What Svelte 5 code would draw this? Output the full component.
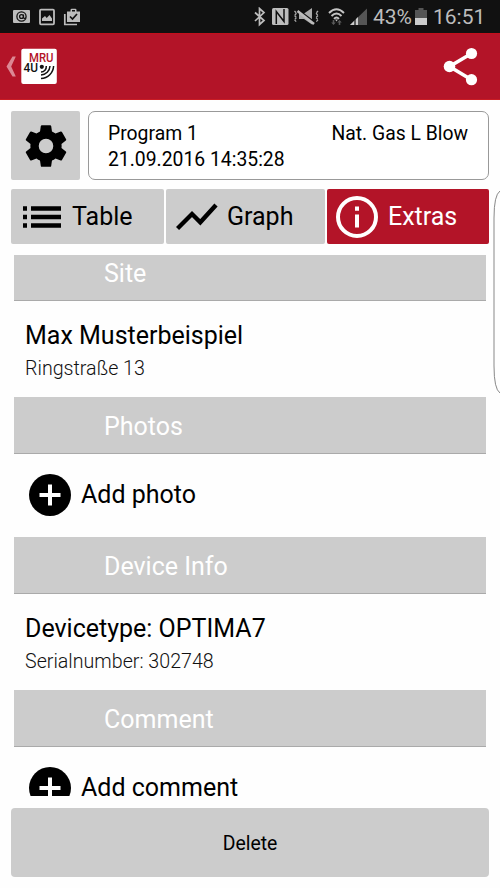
<script lang="ts">
	type Row = { title: string; detail?: string; action?: boolean };
	type Section = { name: string; row: Row };

	const sections: Section[] = [
		{ name: 'Site', row: { title: 'Max Musterbeispiel', detail: 'Ringstraße 13' } },
		{ name: 'Photos', row: { title: 'Add photo', action: true } },
		{ name: 'Device Info', row: { title: 'Devicetype: OPTIMA7', detail: 'Serialnumber: 302748' } },
		{ name: 'Comment', row: { title: 'Add comment', action: true } }
	];

	let active = 'extras';
</script>

<div class="screen">
	<div class="status">
		<svg class="notifications" width="68" height="18" viewBox="0 0 68 18">
			<rect x="0" y="2" width="17" height="13" rx="1" fill="#bdbdbd" />
			<circle cx="8.5" cy="8.5" r="4.6" fill="none" stroke="#111" stroke-width="1.3" />
			<circle cx="8.5" cy="8.5" r="1.9" fill="none" stroke="#111" stroke-width="1.3" />
			<path d="M10.5 6.5v3q.7 1.8 2.3.2" fill="none" stroke="#111" stroke-width="1.2" />
			<rect x="27" y="1.7" width="14" height="14.6" rx="1" fill="none" stroke="#bdbdbd" stroke-width="1.8" />
			<path d="M29 13v-2.5l3-2.5 1.7 2 2.8-3 2.5 3.4V13z" fill="#bdbdbd" />
			<path d="M51.8 6v10.5H64" fill="none" stroke="#bdbdbd" stroke-width="1.7" />
			<path d="M54 3.5h3.5V2q0-1.3 1.3-1.3h3.4q1.3 0 1.3 1.3v1.5H67V14H54z" fill="#bdbdbd" />
			<path d="M59 2h3v1.5h-3z" fill="#111" />
			<path d="M57 8.5l2.5 2.5L64 6" fill="none" stroke="#111" stroke-width="1.7" />
		</svg>
		<div class="indicators">
			<svg width="115" height="20" viewBox="0 0 115 20">
				<path d="M1 5.5l9 8-4.5 4v-16l4.500 4-9 8.500" fill="none" stroke="#bdbdbd" stroke-width="1.7" />
				<rect x="18" y="1" width="16.5" height="17" rx="1.5" fill="#bdbdbd" />
				<path d="M22.3 17V4.500L30 14.500V2" fill="none" stroke="#111" stroke-width="1.5" />
				<path d="M45 6.500h5l8-5.500v16.500l-8-5.500h-5z" fill="#aaa" />
				<path d="M43 2l19 14.500" stroke="#111" stroke-width="2" />
				<path d="M43.500 4l16.500 13" stroke="#bdbdbd" stroke-width="2.600" />
				<path d="M40.500 4l2 2.200-2 2.200 2 2.200-2 2.200 2 2.200M64 4l-2 2.200 2 2.200-2 2.200 2 2.200-2 2.200" fill="none" stroke="#aaa" stroke-width="1.3" stroke-dasharray="2.4 .6" />
				<path d="M75 6q7.500-7.500 15 0M77.500 9q5-5 10 0M80 11.800q2.500-2.600 5 0" fill="none" stroke="#c4c4c4" stroke-width="1.9" />
				<path d="M81 12.500h3l-1.500 2z" fill="#bdbdbd" />
				<path d="M79.500 18l-2.300-2.500h1.500V13h1.600v2.500h1.500zM85.500 13l2.300 2.500h-1.500V18h-1.600v-2.500h-1.500z" fill="#5a5a5a" />
				<path d="M96 18L113 1.500V18z" fill="#555" />
				<path d="M96 18l8-8v8z" fill="#ccc" />
				<path d="M101 12v6" stroke="#111" stroke-width="1.2" />
			</svg>
			<span class="percent">43%</span>
			<svg class="battery" width="12" height="18" viewBox="0 0 12 18">
				<path d="M0 2h3.500V0h5v2H12v8H0z" fill="#555" />
				<path d="M0 10h12v7H0z" fill="#ccc" />
			</svg>
			<span class="clock">16:51</span>
		</div>
	</div>

	<header class="appbar">
		<svg class="home" width="54" height="40" viewBox="0 0 54 40">
			<path d="M7.500 9.500h3.300L6.200 19.500l4.600 10H7.500L1.500 19.500z" fill="#dc8894" />
			<rect x="16.3" y="1.8" width="35.5" height="35.2" rx="2" fill="#fff" />
			<text class="logo red" x="24" y="15.3" textLength="24.5" lengthAdjust="spacingAndGlyphs">MRU</text>
			<text class="logo" x="18.5" y="25.4" textLength="14.5" lengthAdjust="spacingAndGlyphs">4U</text>
			<circle cx="36.8" cy="19.8" r="2.1" fill="#111" />
			<path d="M41.300 19a5.500 5.500 0 0 1-5.300 6M45 19a9.500 9.500 0 0 1-9 9M48.600 19a13 13 0 0 1-12.600 12.500" fill="none" stroke="#111" stroke-width="1.5" />
		</svg>
		<svg class="share" width="36" height="40" viewBox="0 0 36 40">
			<path d="M28.500 6.500L6.500 19.500l22 13.200" fill="none" stroke="#fff" stroke-width="3.6" />
			<circle cx="28.5" cy="6.5" r="5.6" fill="#fff" />
			<circle cx="6.5" cy="19.5" r="5.8" fill="#fff" />
			<circle cx="28.5" cy="32.7" r="5.6" fill="#fff" />
		</svg>
	</header>

	<div class="summary">
		<button class="settings" aria-label="Settings">
			<svg width="50" height="50" viewBox="0 0 24 24">
				<path d="M19.430 12.980c.040-.320.070-.640.070-.980s-.030-.660-.070-.980l2.110-1.650c.190-.150.240-.420.120-.640l-2-3.460c-.120-.220-.390-.300-.610-.220l-2.490 1c-.520-.400-1.080-.730-1.690-.980l-.380-2.650C14.460 2.180 14.250 2 14 2h-4c-.250 0-.460.180-.490.420l-.380 2.650c-.610.250-1.170.590-1.690.980l-2.490-1c-.230-.090-.490 0-.610.220l-2 3.460c-.130.220-.070.490.120.640l2.110 1.650c-.040.320-.070.650-.070.980s.030.660.070.980l-2.110 1.650c-.190.150-.240.420-.120.640l2 3.460c.120.220.390.300.610.220l2.490-1c.520.400 1.080.730 1.690.980l.380 2.650c.030.240.240.420.490.420h4c.250 0 .460-.180.490-.420l.380-2.650c.610-.250 1.170-.590 1.690-.980l2.490 1c.230.090.490 0 .610-.220l2-3.460c.120-.220.070-.490-.120-.640l-2.110-1.650zM12 15.500a3.500 3.500 0 1 1 0-7 3.500 3.500 0 0 1 0 7z" />
			</svg>
		</button>
		<div class="card">
			<div class="line">
				<span>Program 1</span>
				<span>Nat. Gas L Blow</span>
			</div>
			<div class="line">
				<span>21.09.2016 14:35:28</span>
			</div>
		</div>
	</div>

	<nav class="tabs">
		<button class="tab" class:active={active === 'table'} on:click={() => (active = 'table')}>
			<svg width="38" height="22" viewBox="0 0 38 22">
				<path d="M0 2.500h4M8 2.500h30M0 11h4M8 11h30M0 19.500h4M8 19.500h30" stroke="currentColor" stroke-width="4.6" />
			</svg>
			<span>Table</span>
		</button>
		<button class="tab graph" class:active={active === 'graph'} on:click={() => (active = 'graph')}>
			<svg width="42" height="28" viewBox="0 0 42 28">
				<path d="M1.500 25.500L16 11l8.300 8.300L40 2" fill="none" stroke="currentColor" stroke-width="4.4" />
			</svg>
			<span>Graph</span>
		</button>
		<button class="tab extras" class:active={active === 'extras'} on:click={() => (active = 'extras')}>
			<svg width="42" height="42" viewBox="0 0 42 42">
				<circle cx="21" cy="21" r="19" fill="none" stroke="currentColor" stroke-width="4" />
				<path d="M21 10.500v4.200M21 18.500v13" stroke="currentColor" stroke-width="4" />
			</svg>
			<span>Extras</span>
		</button>
	</nav>

	<main class="list">
		{#each sections as section}
			<h2>{section.name}</h2>
			{#if section.row.action}
				<div class="row action">
					<svg width="42" height="42" viewBox="0 0 42 42">
						<circle cx="21" cy="21" r="21" />
						<path d="M21 10.500v21M10.500 21h21" stroke="#fff" stroke-width="4" />
					</svg>
					<span>{section.row.title}</span>
				</div>
			{:else}
				<div class="row">
					<div class="title">{section.row.title}</div>
					<div class="detail">{section.row.detail}</div>
				</div>
			{/if}
		{/each}
	</main>

	<button class="delete">Delete</button>

	<svg class="edge" width="7" height="204" viewBox="0 0 7 204">
		<path d="M7 1Q1 5 1 28v148q0 23 6 27" fill="none" stroke="#888" stroke-width="1" />
	</svg>
</div>

<style>
	:global(body) {
		margin: 0;
		background: #fefefe;
	}

	.screen {
		position: relative;
		display: flex;
		flex-direction: column;
		box-sizing: border-box;
		width: 500px;
		height: 888px;
		overflow: hidden;
		font-family: Roboto, sans-serif;
		color: #000;
	}

	svg {
		display: block;
		flex: none;
	}

	button {
		border: 0;
		padding: 0;
		font: inherit;
		color: inherit;
		background: #ccc;
		border-radius: 2px;
	}

	.status {
		display: flex;
		justify-content: space-between;
		height: 33px;
		padding: 0 16px 0 13px;
		box-sizing: border-box;
		background: #111;
		color: #bdbdbd;
	}

	.notifications {
		margin-top: 8px;
	}

	.indicators {
		display: flex;
		align-items: flex-start;
		font-size: 21px;
		line-height: 35px;
	}

	.indicators svg {
		margin-top: 7px;
		margin-left: -1px;
	}

	.percent {
		width: 43px;
		margin-left: 4px;
	}

	.indicators .battery {
		margin-top: 8px;
		margin-left: -1px;
	}

	.clock {
		margin-left: 6px;
		width: 51px;
		text-align: right;
	}

	.appbar {
		display: flex;
		justify-content: space-between;
		box-sizing: border-box;
		height: 67px;
		padding: 13px 21px 0 5px;
		background: #b31428;
		border-top: 1px solid #c40f1c;
		border-bottom: 1px solid #c91c24;
	}

	.logo {
		font: 500 12.6px Roboto, sans-serif;
		fill: #111;
	}

	.logo.red {
		fill: #b31428;
	}

	.summary {
		display: flex;
		gap: 8px;
		height: 69px;
		margin: 11px 11px 0;
	}

	.settings {
		display: flex;
		align-items: center;
		justify-content: center;
		width: 69px;
	}

	.card {
		flex: 1;
		box-sizing: border-box;
		padding: 9px 20px 0 19px;
		border: 1px solid #999;
		border-radius: 7px;
		background: #fff;
		font-size: 19.35px;
		line-height: 26px;
	}

	.line {
		display: flex;
		justify-content: space-between;
	}

	.tabs {
		display: grid;
		grid-template-columns: 153px 159px 162px;
		gap: 2px;
		height: 55px;
		margin: 9px 11px 0;
		font-size: 25px;
	}

	.tab {
		display: flex;
		align-items: center;
		gap: 11px;
		padding-left: 12px;
	}

	.graph {
		gap: 9px;
		padding-left: 10px;
	}

	.extras {
		gap: 10px;
		padding-left: 9px;
	}

	.active {
		background: #b31428;
		color: #fff;
	}

	.list {
		height: 541px;
		margin: 11px 14px 0;
		overflow: hidden;
	}

	h2 {
		box-sizing: border-box;
		height: 57px;
		margin: 0;
		padding-left: 90px;
		border-bottom: 1px solid #aaa;
		background: #ccc;
		color: #fff;
		font-size: 25px;
		font-weight: 400;
		line-height: 60px;
	}

	h2:first-child {
		margin-top: -11px;
	}

	.row {
		box-sizing: border-box;
		height: 96px;
		padding: 18px 11px 0;
	}

	.title {
		font-size: 25px;
		line-height: 34px;
	}

	.detail {
		color: #111;
		font-size: 19.65px;
		font-weight: 300;
		line-height: 31px;
	}

	.action {
		display: flex;
		align-items: center;
		gap: 10px;
		height: 83px;
		padding: 0 15px 2px;
		font-size: 25px;
	}

	.delete {
		height: 69px;
		margin: 12px 11px 0;
		padding-top: 2px;
		border-radius: 4px;
		font-size: 19.4px;
	}

	.edge {
		position: absolute;
		top: 190px;
		right: 0;
	}
</style>
